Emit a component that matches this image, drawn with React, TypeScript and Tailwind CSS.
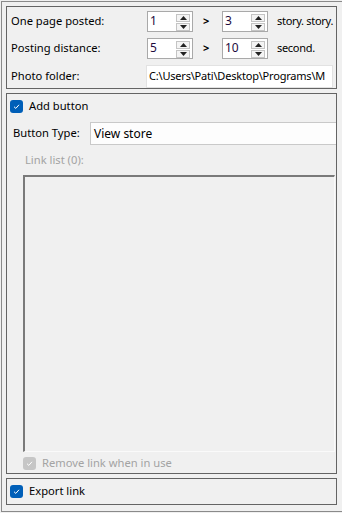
import React from 'react'

const font = { fontFamily: '"Noto Sans", "Open Sans", sans-serif' }

function Arrows() {
  return (
    <div className="absolute right-[2px] top-[2px] flex flex-col gap-[1px]">
      <div className="flex h-[8px] w-[14px] items-center justify-center border border-[#c4c4c4] bg-[#f4f4f4]">
        <svg width="7" height="4" viewBox="0 0 7 4">
          <path d="M0 4 L3.5 0 L7 4 Z" fill="#222" />
        </svg>
      </div>
      <div className="flex h-[8px] w-[14px] items-center justify-center border border-[#c4c4c4] bg-[#f4f4f4]">
        <svg width="7" height="4" viewBox="0 0 7 4">
          <path d="M0 0 L3.5 4 L7 0 Z" fill="#222" />
        </svg>
      </div>
    </div>
  )
}

function Spinner({ value }: { value: string }) {
  return (
    <div className="relative h-[21px] w-[46px] shrink-0 border border-[#a9a9a9] bg-white">
      <span className="absolute left-[2px] top-[0px] text-[12px] leading-[17px] text-[#1d0b3e]">
        {value}
      </span>
      <Arrows />
    </div>
  )
}

function Check({ disabled }: { disabled?: boolean }) {
  return (
    <div
      className={
        'flex h-[13px] w-[13px] shrink-0 items-center justify-center rounded-[3px] ' +
        (disabled ? 'bg-[#c6c6c6]' : 'bg-[#005fb8]')
      }
    >
      <svg width="9" height="9" viewBox="0 0 9 9">
        <path d="M2 4.7 L3.8 6.4 L7 2.8" fill="none" stroke="#fff" strokeWidth="1" />
      </svg>
    </div>
  )
}

function SpinRow({ label, a, b, unit }: { label: string; a: string; b: string; unit: string }) {
  return (
    <div className="flex h-[21px] items-center">
      <span className="w-[140px] shrink-0 pl-[4px]">{label}</span>
      <Spinner value={a} />
      <span className="ml-[10px] w-[19px] shrink-0 text-[11px] font-bold">&gt;</span>
      <Spinner value={b} />
      <span className="ml-[9px] whitespace-nowrap text-[11px] tracking-[-0.3px]">{unit}</span>
    </div>
  )
}

export default function App() {
  return (
    <div className="h-[513px] w-[342px] overflow-hidden bg-[#f0f0f0] text-[11.2px] text-black" style={font}>
      <div className="ml-[1px] mt-[1px] flex h-[511px] w-[345px] flex-col border-b border-l border-t border-[#8a8a8a] pl-[4px] pt-[4px]">
        {/* settings group */}
        <div className="flex h-[83px] w-[331px] flex-col gap-[6px] overflow-hidden border border-[#646464] pt-[4px]">
          <SpinRow label="One page posted:" a="1" b="3" unit="story. story." />
          <SpinRow label="Posting distance:" a="5" b="10" unit="second." />
          <div className="flex h-[23px] items-center">
            <span className="w-[139px] shrink-0 pl-[4px]">Photo folder:</span>
            <div className="flex h-[23px] w-[187px] items-center overflow-hidden whitespace-nowrap border border-[#e2e2e2] bg-white pl-[2px] text-[11px] tracking-[-0.2px]">
              C:\Users\Pati\Desktop\Programs\M
            </div>
          </div>
        </div>

        {/* button group */}
        <div className="mt-[4px] flex h-[381px] w-[331px] flex-col border border-[#646464]">
          <div className="flex h-[20px] items-center gap-[6px] pl-[3px] pt-[5px]">
            <Check />
            <span>Add button</span>
          </div>
          <div className="mt-[8px] flex h-[23px] items-center">
            <span className="w-[83px] shrink-0 pl-[6px]">Button Type:</span>
            <div className="flex h-[23px] flex-1 items-center border-b border-l border-t border-[#c9c9c9] bg-[#fdfdfd] pl-[3px] text-[12px]">
              View store
            </div>
          </div>
          <div className="mt-[7px] pl-[18px] text-[#a3a3a3]">Link list (0):</div>
          <div className="ml-[16px] mt-[6px] h-[277px] w-[312px] border-b border-l-2 border-r border-t-2 border-b-[#fafafa] border-l-[#7a7a7a] border-r-[#fafafa] border-t-[#7a7a7a] bg-[#f0f0f0]" />
          <div className="mt-[3px] flex items-center gap-[6px] pl-[16px]">
            <Check disabled />
            <span className="text-[#a3a3a3]">Remove link when in use</span>
          </div>
        </div>

        {/* export group */}
        <div className="mt-[4px] flex h-[27px] w-[331px] items-center gap-[6px] border border-[#646464] pl-[3px]">
          <Check />
          <span>Export link</span>
        </div>
      </div>
    </div>
  )
}
